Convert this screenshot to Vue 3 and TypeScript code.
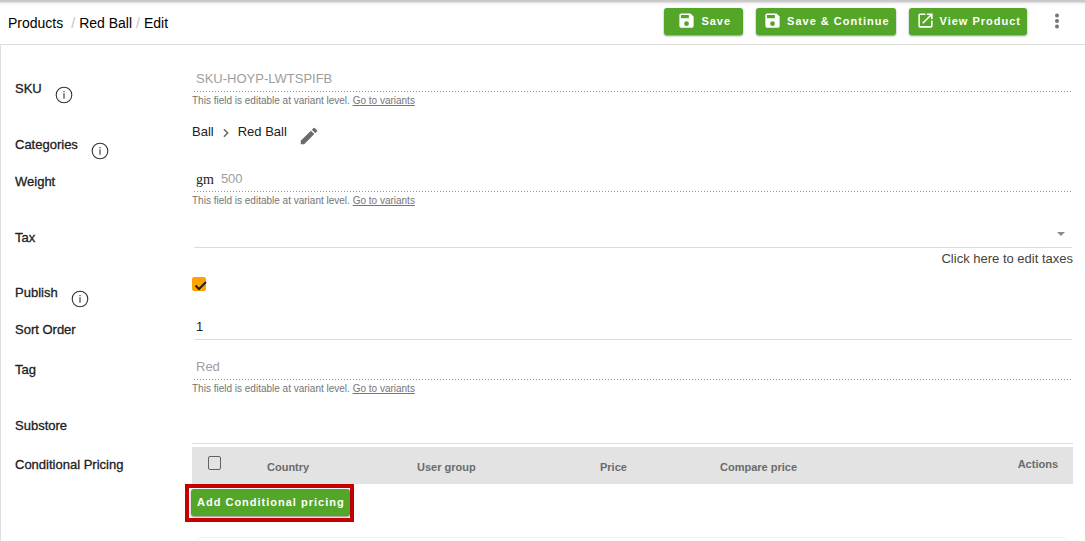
<script setup lang="ts">
import { ref } from 'vue'

const sku = ref('SKU-HOYP-LWTSPIFB')
const weight = ref('500')
const tax = ref('')
const publish = ref(true)
const sortOrder = ref('1')
const tag = ref('Red')
const allRows = ref(false)
const savePath =
  'M17 3H5a2 2 0 0 0-2 2v14a2 2 0 0 0 2 2h14a2 2 0 0 0 2-2V7l-4-4zm-5 16a3 3 0 1 1 0-6 3 3 0 0 1 0 6zm3-10H5V5h10v4z'
const openPath =
  'M19 19H5V5h7V3H5a2 2 0 0 0-2 2v14a2 2 0 0 0 2 2h14a2 2 0 0 0 2-2v-7h-2v7zM14 3v2h3.6l-9.8 9.8 1.4 1.4L19 6.4V10h2V3h-7z'
const actions = [
  { label: 'Save', path: savePath, kind: 'compact' },
  { label: 'Save & Continue', path: savePath, kind: '' },
  { label: 'View Product', path: openPath, kind: '' },
]
</script>

<template>
  <div class="page">
    <header class="topbar">
      <nav class="crumbs" aria-label="Breadcrumb">
        <a href="#products" class="first">Products</a>
        <span class="slash">/</span>
        <a href="#red-ball">Red Ball</a>
        <span class="slash">/</span>
        <span>Edit</span>
      </nav>
      <div class="actions">
        <button v-for="a in actions" :key="a.label" type="button" class="btn" :class="a.kind">
          <svg viewBox="0 0 24 24" width="19" height="19" aria-hidden="true"><path :d="a.path" /></svg>
          <span>{{ a.label }}</span>
        </button>
        <button type="button" class="more" aria-label="More options">
          <svg viewBox="0 0 20 20" width="20" height="20" aria-hidden="true">
            <circle cx="10" cy="4.5" r="2" /><circle cx="10" cy="10" r="2" /><circle cx="10" cy="15.5" r="2" />
          </svg>
        </button>
      </div>
    </header>

    <form class="form" @submit.prevent>
      <div class="row tall">
        <div class="name with-info">
          <label for="sku">SKU</label>
          <svg class="info" viewBox="0 0 18 18" aria-hidden="true"><circle cx="9" cy="9" r="7.8" /><path d="M9 7.2v5.6M9 5v1.2" /></svg>
        </div>
        <div>
          <div class="field locked"><input id="sku" v-model="sku" type="text" disabled /></div>
          <p class="hint">This field is editable at variant level. <a href="#variants">Go to variants</a></p>
        </div>
      </div>

      <div class="row info-row">
        <div class="name with-info">
          <span>Categories</span>
          <svg class="info" viewBox="0 0 18 18" aria-hidden="true"><circle cx="9" cy="9" r="7.8" /><path d="M9 7.2v5.6M9 5v1.2" /></svg>
        </div>
        <div class="category">
          <span>Ball</span>
          <svg class="chevron" viewBox="0 0 8 12" width="8" height="10" aria-hidden="true"><path d="M1.5 1.5 6 6l-4.5 4.5" /></svg>
          <span>Red Ball</span>
          <button type="button" class="edit" aria-label="Edit categories">
            <svg viewBox="0 0 24 24" width="22" height="22" aria-hidden="true"><path d="M3 17.25V21h3.75L17.8 9.94l-3.75-3.75L3 17.25zM20.7 7.04a1 1 0 0 0 0-1.41l-2.34-2.34a1 1 0 0 0-1.41 0l-1.83 1.83 3.75 3.75 1.83-1.83z" /></svg>
          </button>
        </div>
      </div>

      <div class="row tall">
        <div class="name"><label for="weight">Weight</label></div>
        <div>
          <div class="field locked"><span class="unit">gm</span><input id="weight" v-model="weight" type="text" disabled /></div>
          <p class="hint">This field is editable at variant level. <a href="#variants">Go to variants</a></p>
        </div>
      </div>

      <div class="row medium">
        <div class="name"><label for="tax">Tax</label></div>
        <div>
          <div class="field">
            <select id="tax" v-model="tax"><option value=""></option></select>
            <svg class="caret" viewBox="0 0 8 4" width="8" height="4" aria-hidden="true"><path d="M0 0h8L4 4z" /></svg>
          </div>
          <p class="tax-link"><a href="#taxes">Click here to edit taxes</a></p>
        </div>
      </div>

      <div class="row info-row">
        <div class="name with-info">
          <label for="publish">Publish</label>
          <svg class="info" viewBox="0 0 18 18" aria-hidden="true"><circle cx="9" cy="9" r="7.8" /><path d="M9 7.2v5.6M9 5v1.2" /></svg>
        </div>
        <div class="check-cell">
          <span class="tick">
            <input id="publish" v-model="publish" type="checkbox" />
            <svg v-if="publish" viewBox="0 0 15 14" width="15" height="14" aria-hidden="true"><path d="M3.5 8.5 7 12l7-7" /></svg>
          </span>
        </div>
      </div>

      <div class="row short">
        <div class="name"><label for="sort">Sort Order</label></div>
        <div class="field"><input id="sort" v-model="sortOrder" type="text" /></div>
      </div>

      <div class="row tall">
        <div class="name"><label for="tag">Tag</label></div>
        <div>
          <div class="field locked"><input id="tag" v-model="tag" type="text" disabled /></div>
          <p class="hint">This field is editable at variant level. <a href="#variants">Go to variants</a></p>
        </div>
      </div>

      <div class="row substore">
        <div class="name"><span>Substore</span></div>
        <div class="empty"></div>
      </div>

      <div class="row pricing">
        <div class="name"><span>Conditional Pricing</span></div>
        <div>
          <table>
            <thead>
              <tr>
                <th class="c-check"><input v-model="allRows" type="checkbox" aria-label="Select all prices" /></th>
                <th class="c-country">Country</th>
                <th class="c-group">User group</th>
                <th class="c-price">Price</th>
                <th>Compare price</th>
                <th class="c-actions">Actions</th>
              </tr>
            </thead>
          </table>
          <div class="highlight"><button type="button" class="btn add">Add Conditional pricing</button></div>
          <div class="panel"></div>
        </div>
      </div>
    </form>
  </div>
</template>

<style>
body {
  background: #fff;
}
</style>

<style scoped>
* {
  box-sizing: border-box;
}
.page {
  height: 100vh;
  overflow: hidden;
  display: flex;
  flex-direction: column;
  font: 13px/16px "Liberation Sans", Arial, sans-serif;
  color: #212121;
}
a {
  color: inherit;
  text-decoration: none;
}
button {
  font: inherit;
  border: 0;
  cursor: pointer;
}
.topbar {
  flex: none;
  height: 45px;
  display: flex;
  justify-content: space-between;
  padding: 0 18px 0 8px;
  border-bottom: 1px solid #dedede;
  background: linear-gradient(#c6c6c6 0, #cecece 2px, #f2f2f2 3px, #fff 6px);
}
.crumbs {
  display: flex;
  align-items: center;
  gap: 4px;
  padding-top: 2px;
  font-size: 14px;
  color: #000;
}
.first {
  margin-right: 4px;
}
.slash {
  color: #c4c4c4;
}
.actions {
  display: flex;
  align-items: flex-start;
  padding-top: 8px;
  gap: 13px;
}
.btn {
  display: flex;
  align-items: center;
  justify-content: center;
  gap: 5px;
  height: 27px;
  padding: 0 6px 2px 7px;
  border-radius: 3px;
  background: #54a629;
  color: #fff;
  font-size: 11px;
  font-weight: bold;
  letter-spacing: 1px;
  white-space: nowrap;
  box-shadow: 0 1px 2px rgba(0, 0, 0, 0.45);
}
.btn svg {
  fill: #fff;
}
.compact {
  padding: 0 12px 2px 13px;
}
.more {
  padding: 3px 0;
  background: none;
  line-height: 0;
  margin-left: 7px;
}
.more svg {
  fill: #757575;
}
.form {
  flex: 1;
  min-height: 0;
  overflow: hidden;
  padding: 23px 12px 0 14px;
  border-left: 1px solid #dedede;
}
.row {
  display: grid;
  grid-template-columns: 177px minmax(0, 1fr);
}
.tall {
  min-height: 56px;
}
.medium {
  min-height: 48px;
}
.info-row {
  min-height: 44px;
}
.short {
  min-height: 40px;
}
.substore {
  min-height: 35px;
}
.name {
  padding-top: 6px;
  -webkit-text-stroke: 0.3px currentColor;
}
.with-info {
  display: flex;
  align-items: flex-start;
  gap: 13px;
  padding-top: 13px;
}
.info {
  width: 18px;
  height: 18px;
  margin-top: 5px;
  fill: none;
  stroke: #333;
  stroke-width: 1.1;
}
.field {
  position: relative;
  display: flex;
  align-items: center;
  height: 24px;
  margin: 0 1px 0 2px;
  padding: 0 2px 2px;
  border-bottom: 1px solid #dcdcdc;
}
.locked {
  padding-bottom: 3px;
  border-bottom: 0;
  background: repeating-linear-gradient(to right, #999 0 1px, transparent 1px 3px) bottom / 100% 1px no-repeat;
}
.field input,
.field select {
  flex: 1;
  min-width: 0;
  height: 20px;
  padding: 0;
  border: 0;
  outline: 0;
  background: none;
  font: inherit;
  color: #212121;
  appearance: none;
}
.field input:disabled {
  color: #9e9e9e;
}
.unit {
  margin-right: 7px;
  padding-top: 2px;
  font: 14px/16px "Liberation Serif", serif;
}
.caret {
  position: absolute;
  right: 7px;
  top: 8px;
  fill: #8c8c8c;
  pointer-events: none;
}
.hint {
  margin: 3px 0 0;
  font-size: 10px;
  line-height: 12px;
  color: #757575;
}
.hint a {
  text-decoration: underline;
  text-underline-offset: 1px;
}
.tax-link {
  margin: 3px 0 0;
  text-align: right;
  color: #424242;
}
.category {
  display: flex;
  align-items: flex-start;
  color: #212121;
}
.chevron {
  margin: 4px 8px 0;
  fill: none;
  stroke: #666;
  stroke-width: 1.8;
}
.edit {
  padding: 0;
  margin: 1px 0 0 11px;
  background: none;
  line-height: 0;
}
.edit svg {
  fill: #6b6b6b;
}
.check-cell {
  padding-top: 5px;
}
.tick {
  position: relative;
  display: block;
  width: 14px;
  height: 14px;
}
.tick input {
  display: block;
  width: 14px;
  height: 14px;
  margin: 0;
  appearance: none;
  border-radius: 2px;
  border: 1px solid #757575;
}
.tick input:checked {
  background: #ffa305;
  border-color: #ffa305;
}
.tick svg {
  position: absolute;
  left: 0;
  top: 0;
  fill: none;
  stroke: #212121;
  stroke-width: 2;
  pointer-events: none;
}
.empty {
  height: 32px;
  border-bottom: 1px solid #dedede;
}
.pricing .name {
  padding-top: 10px;
}
table {
  width: 100%;
  table-layout: fixed;
  border-collapse: collapse;
  background: #e3e3e3;
}
th {
  height: 37px;
  padding: 3px 0 0;
  text-align: left;
  font-size: 11px;
  font-weight: bold;
  color: #6b6b6b;
}
.c-check {
  width: 75px;
  padding: 0 0 5px 16px;
}
.c-check input {
  display: block;
  width: 13px;
  height: 14px;
  margin: 0;
  appearance: none;
  border: 1px solid #616161;
  border-radius: 2px;
}
.c-check input:checked {
  background: #ffa305;
}
.c-country {
  width: 150px;
}
.c-group {
  width: 183px;
}
.c-price {
  width: 120px;
}
.c-actions {
  width: 80px;
  padding: 0 15px 3px 0;
  text-align: right;
}
.highlight {
  width: fit-content;
  margin-left: -7px;
  padding: 1px 0 2px 2px;
  border: 4px solid #c40000;
}
.add {
  padding: 0 5px 2px 6px;
}
.panel {
  height: 40px;
  margin: 15px 6px 0 5px;
  border: 1px solid #f0f0f0;
  border-radius: 4px;
}
</style>
